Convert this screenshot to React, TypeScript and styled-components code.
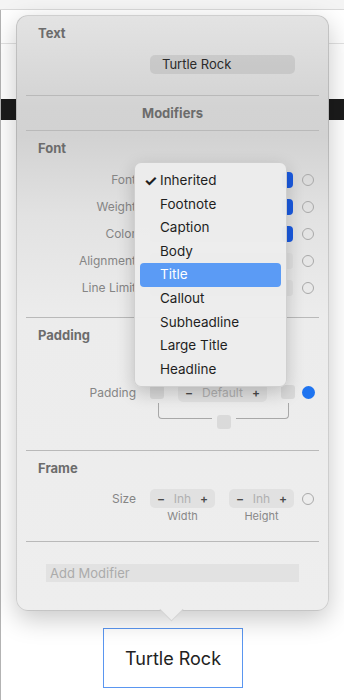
import React from 'react'
import styled, { createGlobalStyle } from 'styled-components'

const GlobalStyle = createGlobalStyle`
  html, body {
    margin: 0;
    padding: 0;
    background: #ffffff;
    font-family: Inter, "Liberation Sans", Arial, sans-serif;
    -webkit-font-smoothing: antialiased;
  }
`

const Page = styled.div`
  position: relative;
  width: 344px;
  height: 700px;
  overflow: hidden;
  background: #ffffff;
`

// backdrop (the editor behind the popover)
const TopStrip = styled.div`
  height: 9px;
  background: #f4f4f4;
  border-bottom: 1px solid #d9d9d9;
`
const Canvas = styled.div`
  display: flex;
  flex-direction: column;
  height: 690px;
  border-left: 1px solid #b3b3b3;
`
const FaintLine = styled.div`
  margin-top: 33px;
  height: 1px;
  background: #e2e2e2;
`
const DarkBar = styled.div`
  margin-top: 55px;
  height: 21px;
  background: #1b1b1b;
`
const PreviewBox = styled.div`
  margin: auto 0 12px 102px;
  width: 138px;
  height: 58px;
  border: 1px solid #5a96f0;
  display: flex;
  align-items: center;
  justify-content: center;
  font-size: 18px;
  color: #222;
`

// popover
const Popover = styled.div`
  position: absolute;
  left: 16px;
  top: 15px;
  width: 313px;
  height: 596px;
  box-sizing: border-box;
  border-radius: 12px;
  border: 1px solid rgba(0, 0, 0, 0.13);
  background: linear-gradient(
    180deg,
    #e3e3e3 0px,
    #d3d3d3 90px,
    #d2d2d2 120px,
    #e2e2e2 200px,
    #ececec 300px,
    #eeeeee 596px
  );
  box-shadow: 0 8px 26px rgba(0, 0, 0, 0.22);
  display: flex;
  flex-direction: column;

  &::after {
    content: '';
    position: absolute;
    left: 146px;
    bottom: -8px;
    width: 16px;
    height: 16px;
    background: #eeeeee;
    transform: rotate(45deg);
    border-right: 1px solid rgba(0, 0, 0, 0.1);
    border-bottom: 1px solid rgba(0, 0, 0, 0.1);
  }
`

const Section = styled.div<{ $h: number }>`
  height: ${(p) => p.$h}px;
  display: flex;
  flex-direction: column;
`

const SectionTitle = styled.div`
  margin: 9px 0 0 21px;
  height: 16px;
  line-height: 16px;
  font-size: 13px;
  font-weight: 700;
  color: #6c6c6c;
`

const Divider = styled.div`
  margin: 0 9px;
  height: 1px;
  background: #b9b9b9;
  flex-shrink: 0;
`

const ModifiersTitle = styled.div`
  height: 34px;
  display: flex;
  align-items: center;
  justify-content: center;
  font-size: 13px;
  font-weight: 700;
  color: #6c6c6c;
`

const NameField = styled.div`
  margin: 14px 0 0 133px;
  width: 145px;
  height: 19px;
  border-radius: 5px;
  background: rgba(0, 0, 0, 0.08);
  font-size: 13px;
  line-height: 19px;
  color: #2a2a2a;
  padding-left: 12px;
  box-sizing: border-box;
`

const Rows = styled.div<{ $top: number }>`
  margin-top: ${(p) => p.$top}px;
  display: flex;
  flex-direction: column;
`

const Row = styled.div<{ $h?: number }>`
  height: ${(p) => p.$h ?? 27}px;
  display: grid;
  grid-template-columns: 119px 145px 12px;
  column-gap: 14px;
  align-items: center;
  & > :nth-child(3) {
    margin-left: -7px;
  }
`

const Label = styled.div`
  text-align: right;
  font-size: 12px;
  color: #858585;
  white-space: nowrap;
`

const Circle = styled.div<{ $on?: boolean }>`
  width: 12px;
  height: 12px;
  border-radius: 50%;
  box-sizing: border-box;
  border: ${(p) => (p.$on ? 'none' : '1px solid #a9a9a9')};
  background: ${(p) => (p.$on ? '#1f74f0' : 'transparent')};
  ${(p) => p.$on && 'width: 13px; height: 13px;'}
`

const Popup = styled.div<{ $active?: boolean }>`
  height: 16px;
  width: 143px;
  border-radius: 4px;
  background: #e0e0e0;
  display: flex;
  justify-content: flex-end;
  &::after {
    content: '';
    width: 11px;
    border-radius: 4px;
    background: ${(p) => (p.$active ? '#1a5ae0' : '#e0e0e0')};
  }
`

const PadControls = styled.div`
  display: flex;
  align-items: center;
  gap: 14px;
  width: 145px;
`

const Square = styled.div`
  width: 14px;
  height: 14px;
  border-radius: 3px;
  background: #dadada;
  flex-shrink: 0;
`

const Stepper = styled.div<{ $w: number }>`
  width: ${(p) => p.$w}px;
  height: 19px;
  border-radius: 5px;
  background: #e1e1e1;
  display: flex;
  align-items: center;
  justify-content: space-between;
  padding: 0 7px;
  box-sizing: border-box;
  font-size: 12px;
  font-weight: 600;
  color: #4a4a4a;
  flex-shrink: 0;
`

const StepValue = styled.span`
  font-weight: 400;
  color: #b0b0b0;
`

const BracketRow = styled.div`
  margin: -3px 0 0 141px;
  width: 131px;
  display: flex;
  align-items: flex-start;
`

const BracketSide = styled.div<{ $side: 'left' | 'right' }>`
  flex: 1;
  height: 16px;
  box-sizing: border-box;
  border-bottom: 1px solid #a8a8a8;
  border-${(p) => p.$side}: 1px solid #a8a8a8;
  border-bottom-${(p) => p.$side}-radius: 4px;
`

const BracketSquare = styled(Square)`
  margin: 12px 5px 0;
`

const SizeControls = styled.div`
  display: flex;
  gap: 14px;
  width: 145px;
`

const SubLabel = styled.div`
  width: 65px;
  margin-top: 2px;
  height: 13px;
  line-height: 13px;
  text-align: center;
  font-size: 11px;
  color: #888;
`

const AddField = styled.div`
  margin: 22px 0 0 29px;
  width: 253px;
  height: 18px;
  background: #e2e2e2;
  font-size: 13px;
  line-height: 18px;
  color: #ababab;
  padding-left: 4px;
  box-sizing: border-box;
`

// dropdown menu over the popover
const Menu = styled.div`
  position: absolute;
  left: 134px;
  top: 162px;
  width: 153px;
  height: 225px;
  box-sizing: border-box;
  padding: 6px 5px;
  border-radius: 7px;
  background: rgba(236, 236, 236, 0.97);
  border: 1px solid rgba(0, 0, 0, 0.12);
  box-shadow: 0 6px 18px rgba(0, 0, 0, 0.2);
  display: flex;
  flex-direction: column;
`

const MenuItem = styled.div<{ $selected?: boolean }>`
  position: relative;
  height: 23.6px;
  line-height: 23.6px;
  padding-left: 20px;
  border-radius: 4px;
  font-size: 13.5px;
  color: ${(p) => (p.$selected ? '#ffffff' : '#1f1f1f')};
  background: ${(p) => (p.$selected ? '#5b9bf5' : 'transparent')};
`

const Check = styled.span`
  position: absolute;
  left: 4px;
  font-size: 15px;
  font-weight: 700;
`

const fontRows = [
  { label: 'Font', active: true },
  { label: 'Weight', active: true },
  { label: 'Color', active: true },
  { label: 'Alignment', active: false },
  { label: 'Line Limit', active: false },
]

const menuItems = [
  'Inherited',
  'Footnote',
  'Caption',
  'Body',
  'Title',
  'Callout',
  'Subheadline',
  'Large Title',
  'Headline',
]

export default function App() {
  return (
    <Page>
      <GlobalStyle />
      <TopStrip />
      <Canvas>
        <FaintLine />
        <DarkBar />
        <PreviewBox>Turtle Rock</PreviewBox>
      </Canvas>

      <Popover>
        <Section $h={79}>
          <SectionTitle>Text</SectionTitle>
          <NameField>Turtle Rock</NameField>
        </Section>
        <Divider />
        <ModifiersTitle>Modifiers</ModifiersTitle>
        <Divider />

        <Section $h={186}>
          <SectionTitle>Font</SectionTitle>
          <Rows $top={10}>
            {fontRows.map((r) => (
              <Row key={r.label}>
                <Label>{r.label}</Label>
                <Popup $active={r.active} />
                <Circle />
              </Row>
            ))}
          </Rows>
        </Section>
        <Divider />

        <Section $h={132}>
          <SectionTitle>Padding</SectionTitle>
          <Rows $top={35}>
            <Row $h={28}>
              <Label>Padding</Label>
              <PadControls>
                <Square />
                <Stepper $w={89}>
                  <span>−</span>
                  <StepValue>Default</StepValue>
                  <span>+</span>
                </Stepper>
                <Square />
              </PadControls>
              <Circle $on />
            </Row>
          </Rows>
          <BracketRow>
            <BracketSide $side="left" />
            <BracketSquare />
            <BracketSide $side="right" />
          </BracketRow>
        </Section>
        <Divider />

        <Section $h={90}>
          <SectionTitle>Frame</SectionTitle>
          <Rows $top={13}>
            <Row $h={19}>
              <Label>Size</Label>
              <SizeControls>
                <Stepper $w={65}>
                  <span>−</span>
                  <StepValue>Inh</StepValue>
                  <span>+</span>
                </Stepper>
                <Stepper $w={65}>
                  <span>−</span>
                  <StepValue>Inh</StepValue>
                  <span>+</span>
                </Stepper>
              </SizeControls>
              <Circle />
            </Row>
            <Row $h={15}>
              <span />
              <SizeControls>
                <SubLabel>Width</SubLabel>
                <SubLabel>Height</SubLabel>
              </SizeControls>
              <span />
            </Row>
          </Rows>
        </Section>
        <Divider />

        <Section $h={68}>
          <AddField>Add Modifier</AddField>
        </Section>
      </Popover>

      <Menu>
        {menuItems.map((m, i) => (
          <MenuItem key={m} $selected={m === 'Title'}>
            {i === 0 && <Check>✓</Check>}
            {m}
          </MenuItem>
        ))}
      </Menu>
    </Page>
  )
}
